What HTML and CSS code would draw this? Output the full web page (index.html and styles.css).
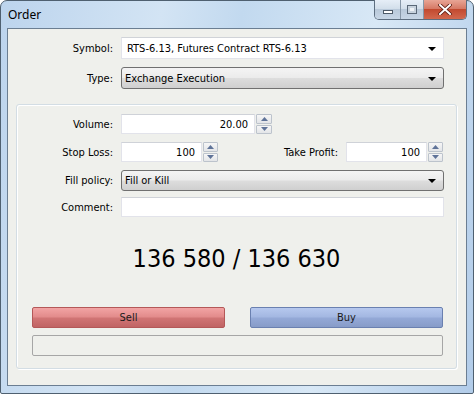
FILE: index.html
```html
<!DOCTYPE html>
<html>
<head>
<meta charset="utf-8">
<link rel="stylesheet" href="styles.css">
</head>
<body>
<div class="window">
  <div class="titlebar">
    <span class="title">Order</span>
    <div class="caption-btns">
      <span class="cbtn min"><span class="min-glyph"></span></span>
      <span class="cbtn max"><span class="max-glyph"></span></span>
      <span class="cbtn close"><svg width="14" height="11" viewBox="0 0 14 11"><path d="M2 1 L12 10 M12 1 L2 10" stroke="#5a1a10" stroke-width="3.6" stroke-linecap="square"/><path d="M2 1 L12 10 M12 1 L2 10" stroke="#fff" stroke-width="2" stroke-linecap="square"/></svg></span>
    </div>
  </div>
  <div class="client">
    <div class="top-form">
      <div class="row">
        <label class="lbl">Symbol:</label>
        <div class="combo edit"><span>RTS-6.13, Futures Contract RTS-6.13</span><span class="arrow"></span></div>
      </div>
      <div class="row">
        <label class="lbl">Type:</label>
        <div class="combo btnstyle"><span>Exchange Execution</span><span class="arrow"></span></div>
      </div>
    </div>
    <div class="group">
      <div class="grow">
        <label class="lbl g">Volume:</label>
        <div class="text num w-vol">20.00</div>
        <div class="spin"><span class="up"><svg width="7" height="4" viewBox="0 0 7 4"><path d="M0 4 L3.5 0 L7 4Z" fill="#5f7398"/></svg></span><span class="dn"><svg width="7" height="4" viewBox="0 0 7 4"><path d="M0 0 L3.5 4 L7 0Z" fill="#5f7398"/></svg></span></div>
      </div>
      <div class="grow">
        <label class="lbl g">Stop Loss:</label>
        <div class="text num w-sl">100</div>
        <div class="spin s2"><span class="up"><svg width="7" height="4" viewBox="0 0 7 4"><path d="M0 4 L3.5 0 L7 4Z" fill="#5f7398"/></svg></span><span class="dn"><svg width="7" height="4" viewBox="0 0 7 4"><path d="M0 0 L3.5 4 L7 0Z" fill="#5f7398"/></svg></span></div>
        <label class="lbl tp">Take Profit:</label>
        <div class="text num w-sl">100</div>
        <div class="spin s2"><span class="up"><svg width="7" height="4" viewBox="0 0 7 4"><path d="M0 4 L3.5 0 L7 4Z" fill="#5f7398"/></svg></span><span class="dn"><svg width="7" height="4" viewBox="0 0 7 4"><path d="M0 0 L3.5 4 L7 0Z" fill="#5f7398"/></svg></span></div>
      </div>
      <div class="grow fill">
        <label class="lbl g">Fill policy:</label>
        <div class="combo btnstyle wide"><span>Fill or Kill</span><span class="arrow"></span></div>
      </div>
      <div class="grow comment">
        <label class="lbl g">Comment:</label>
        <div class="text wide"></div>
      </div>
      <div class="price">136 580 / 136 630</div>
      <div class="actions">
        <div class="act sell">Sell</div>
        <div class="act buy">Buy</div>
      </div>
      <div class="progress"></div>
    </div>
  </div>
</div>
</body>
</html>
```
FILE: styles.css
```css
* { box-sizing: border-box; }
html, body { margin: 0; padding: 0; }
body {
  width: 474px;
  height: 394px;
  background: #ffffff;
  font-family: "DejaVu Sans Condensed", "DejaVu Sans", sans-serif;
  font-size: 11px;
  color: #000;
  overflow: hidden;
}
.window {
  width: 474px;
  height: 394px;
  border: 1px solid #4f6070;
  border-radius: 7px 7px 2px 2px;
  background: linear-gradient(100deg, #bcd4ed 0%, #d3e4f4 30%, #c2d9ef 45%, #d8e8f6 70%, #b2cce9 100%);
  display: flex;
  flex-direction: column;
  padding: 0 6px 7px 6px;
}
.titlebar {
  height: 27px;
  display: flex;
  align-items: flex-start;
  justify-content: space-between;
}
.title {
  font-family: "Noto Sans", "Open Sans", sans-serif;
  font-size: 12px;
  margin: 5px 0 0 1px;
  color: #000;
}
.caption-btns {
  display: flex;
  margin-top: -1px;
  height: 20px;
  border: 1px solid #5d6e80;
  border-top: none;
  border-radius: 0 0 5px 5px;
  overflow: hidden;
}
.cbtn {
  display: flex;
  align-items: center;
  justify-content: center;
  height: 19px;
}
.min, .max {
  background: linear-gradient(#e6eef7 0%, #d3dfeb 45%, #b9c9da 50%, #c7d6e6 100%);
  border-right: 1px solid #8797a8;
}
.min { width: 26px; }
.max { width: 23px; }
.close {
  width: 42px;
  background: linear-gradient(#e8a595 0%, #d67a66 45%, #c24a30 50%, #d2684e 100%);
}
.min-glyph {
  width: 10px; height: 4px;
  border: 1px solid #4d5a68;
  background: #fff;
  margin-top: 4px;
}
.max-glyph {
  width: 10px; height: 9px;
  border: 1px solid #5a6878;
  background: #eef2f6;
  box-shadow: inset 0 0 0 2px #c8d3de;
}
.client {
  flex: 1;
  border: 1px solid #6b7e92;
  background: #eff0ec;
  display: flex;
  flex-direction: column;
}
.top-form {
  padding-top: 8px;
  display: flex;
  flex-direction: column;
  gap: 8px;
}
.row {
  display: flex;
  align-items: center;
  gap: 8px;
  height: 22px;
}
.lbl {
  width: 105px;
  text-align: right;
  white-space: nowrap;
}
.lbl.g { width: 96px; }
.combo {
  width: 323px;
  height: 22px;
  display: flex;
  align-items: center;
  justify-content: space-between;
  padding: 0 7px 0 5px;
}
.combo.edit {
  background: #fff;
  border: 1px solid #e2e3ea;
  border-top-color: #d0d3d8;
}
.combo.btnstyle {
  border: 1px solid #707070;
  border-radius: 3px;
  background: linear-gradient(#f4f4f4 0%, #ebebeb 48%, #dddddd 52%, #cfcfcf 100%);
  padding-left: 3px;
}
.arrow {
  width: 0; height: 0;
  border-left: 4px solid transparent;
  border-right: 4px solid transparent;
  border-top: 4px solid #000;
  margin-top: 1px;
}
.group {
  margin: 15px 9px 16px 8px;
  flex: 1;
  border: 1px solid #d3dde4;
  border-radius: 3px;
  box-shadow: inset 1px 1px 0 #fff, 1px 1px 0 #fff;
  display: flex;
  flex-direction: column;
  padding-top: 9px;
}
.grow {
  display: flex;
  align-items: center;
  gap: 8px;
  height: 20px;
  margin-bottom: 8px;
}
.grow.fill { height: 21px; margin-bottom: 6px; }
.grow.comment { margin-bottom: 0; }
.combo.wide, .text.wide { width: 323px; }
.combo.wide { height: 21px; }
.text {
  height: 20px;
  background: #fff;
  border: 1px solid #e2e3ea;
  border-top-color: #cfd2d8;
  display: flex;
  align-items: center;
  justify-content: flex-end;
  padding-right: 6px;
}
.w-vol { width: 134px; }
.w-sl { width: 81px; }
.spin {
  width: 16px;
  height: 20px;
  display: flex;
  flex-direction: column;
  gap: 1px;
  margin-left: -7px;
}
.spin.s2 { margin-left: -7px; width: 15px; }
.spin span {
  flex: 1;
  display: flex;
  align-items: center;
  justify-content: center;
  border: 1px solid #bcc3cc;
  border-radius: 1px;
  background: linear-gradient(#f6f6f6, #e3e5e8);
}
.lbl.tp { width: 112px; }
.price {
  font-size: 25px;
  text-align: center;
  margin-top: 27px;
  height: 38px;
  line-height: 30px;
}
.actions {
  display: flex;
  justify-content: space-between;
  margin: 25px 13px 0 15px;
}
.act {
  width: 193px;
  height: 21px;
  display: flex;
  align-items: center;
  justify-content: center;
  border-radius: 2px;
  color: #1a1a1a;
}
.sell {
  border: 1px solid #b45858;
  background: linear-gradient(#f2a4a4 0%, #e38c8c 45%, #d07474 55%, #c06464 100%);
}
.buy {
  border: 1px solid #6a80b0;
  background: linear-gradient(#b6c8ee 0%, #a4b8e2 45%, #93a8d6 55%, #879cc8 100%);
}
.progress {
  margin: 7px 13px 0 15px;
  height: 21px;
  border: 1px solid #a6a6a6;
  border-radius: 2px;
  background: #eff0ec;
}
```
